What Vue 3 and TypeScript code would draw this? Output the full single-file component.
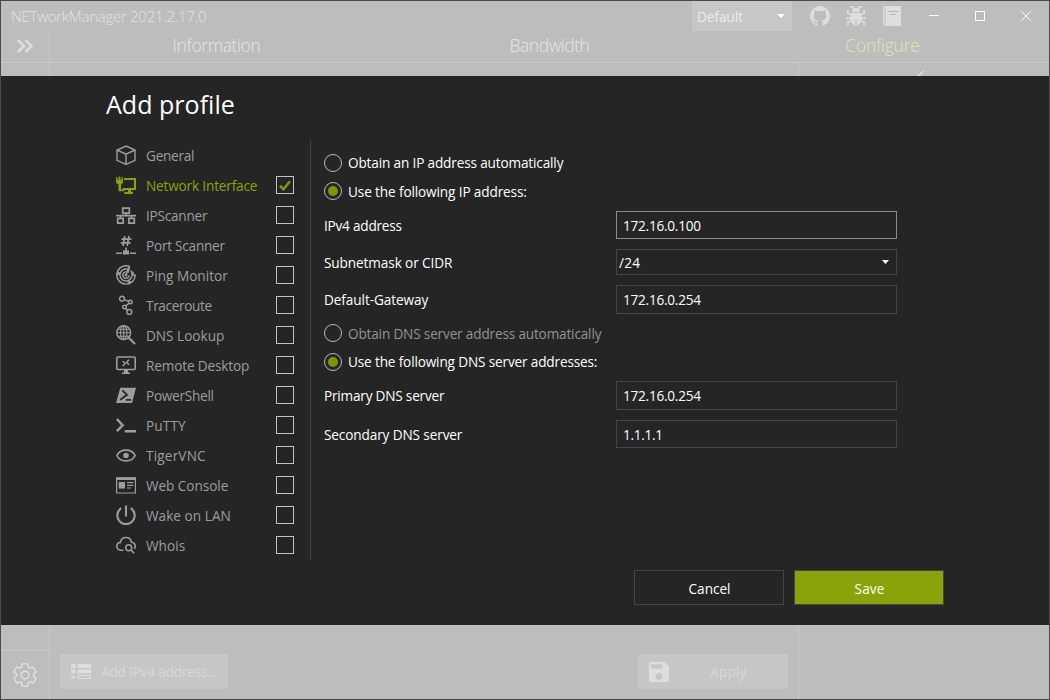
<script setup lang="ts">
import { ref } from 'vue'

interface ProfileView { name: string; width: number; icon: string; check: boolean }
interface FormRow {
  kind: 'radio' | 'text' | 'combo'
  label: string
  width: number
  cls: string
  value?: string
  valueWidth?: number
  on?: boolean
}

// Adjusts tracking so a label occupies the given number of pixels.
const vFit = {
  mounted(el: HTMLElement, binding: { value: number }) {
    const chars = (el.textContent ?? '').length
    if (!chars) return
    const natural = el.getBoundingClientRect().width
    el.style.letterSpacing = `${(binding.value + 0.8 - natural) / chars}px`
  },
}

const tabs = [
  { name: 'Information', width: 87, active: false },
  { name: 'Bandwidth', width: 79, active: false },
  { name: 'Configure', width: 73.5, active: true },
]

const selected = ref('Network Interface')

const views: ProfileView[] = [
  { name: 'General', width: 47.5, icon: 'cube', check: false },
  { name: 'Network Interface', width: 110.5, icon: 'nic', check: true },
  { name: 'IPScanner', width: 60.5, icon: 'lan', check: true },
  { name: 'Port Scanner', width: 78, icon: 'port', check: true },
  { name: 'Ping Monitor', width: 81, icon: 'radar', check: true },
  { name: 'Traceroute', width: 65, icon: 'route', check: true },
  { name: 'DNS Lookup', width: 77.5, icon: 'dns', check: true },
  { name: 'Remote Desktop', width: 102.5, icon: 'rdp', check: true },
  { name: 'PowerShell', width: 67, icon: 'ps', check: true },
  { name: 'PuTTY', width: 39, icon: 'putty', check: true },
  { name: 'TigerVNC', width: 59, icon: 'eye', check: true },
  { name: 'Web Console', width: 81.5, icon: 'web', check: true },
  { name: 'Wake on LAN', width: 84, icon: 'power', check: true },
  { name: 'Whois', width: 38.5, icon: 'whois', check: true },
]

const rows: FormRow[] = [
  { kind: 'radio', label: 'Obtain an IP address automatically', width: 214.5, cls: 'r-obtain-ip', on: false },
  { kind: 'radio', label: 'Use the following IP address:', width: 178, cls: 'r-use-ip low', on: true },
  { kind: 'text', label: 'IPv4 address', width: 77, cls: 'r-ipv4 hover', value: '172.16.0.100', valueWidth: 77 },
  { kind: 'combo', label: 'Subnetmask or CIDR', width: 127.5, cls: 'r-mask low', value: '/24', valueWidth: 20.5 },
  { kind: 'text', label: 'Default-Gateway', width: 103.5, cls: 'r-gateway low odd', value: '172.16.0.254', valueWidth: 77 },
  { kind: 'radio', label: 'Obtain DNS server address automatically', width: 252.5, cls: 'r-obtain-dns low disabled', on: false },
  { kind: 'radio', label: 'Use the following DNS server addresses:', width: 248.5, cls: 'r-use-dns', on: true },
  { kind: 'text', label: 'Primary DNS server', width: 119.5, cls: 'r-dns1 low odd', value: '172.16.0.254', valueWidth: 77 },
  { kind: 'text', label: 'Secondary DNS server', width: 137.5, cls: 'r-dns2 low', value: '1.1.1.1', valueWidth: 39 },
]

function gearPath(): string {
  const pts: string[] = []
  const at = (r: number, deg: number) => {
    const a = ((deg - 90) * Math.PI) / 180
    return `${(12 + r * Math.cos(a)).toFixed(2)} ${(12 + r * Math.sin(a)).toFixed(2)}`
  }
  for (let k = 0; k < 6; k++) {
    const c = k * 60
    pts.push(at(8.6, c - 22), at(11.5, c - 15), at(11.5, c + 15), at(8.6, c + 22))
  }
  return `M${pts.join('L')}Z`
}
const gear = gearPath()
</script>

<template>
  <div class="window">
    <header class="top">
      <div class="titlebar">
        <div class="app-title"><span v-fit="194.5">NETworkManager 2021.2.17.0</span></div>
        <div class="profile-combo">
          <span v-fit="45">Default</span>
          <svg width="8" height="4" viewBox="0 0 8 4"><path d="M0 0h8L4 4z" fill="#fff" /></svg>
        </div>
        <div class="links">
          <svg width="20" height="20" viewBox="2 2 20 20"><path fill="#dedede" d="M12 2A10 10 0 0 0 2 12c0 4.42 2.87 8.17 6.84 9.5.5.08.66-.23.66-.5v-1.69c-2.77.6-3.36-1.34-3.36-1.34-.46-1.16-1.11-1.47-1.11-1.47-.91-.62.07-.6.07-.6 1 .07 1.53 1.03 1.53 1.03.87 1.52 2.34 1.07 2.91.83.09-.65.35-1.09.63-1.34-2.22-.25-4.55-1.11-4.55-4.92 0-1.11.38-2 1.03-2.71-.1-.25-.45-1.29.1-2.64 0 0 .84-.27 2.75 1.02.79-.22 1.65-.33 2.5-.33.85 0 1.71.11 2.5.33 1.91-1.29 2.75-1.02 2.75-1.02.55 1.35.2 2.39.1 2.64.65.71 1.03 1.6 1.03 2.71 0 3.82-2.34 4.66-4.57 4.91.36.31.69.92.69 1.85V21c0 .27.16.59.67.5C19.14 20.16 22 16.42 22 12A10 10 0 0 0 12 2z" /></svg>
          <svg width="20" height="20" viewBox="0 0 20 20">
            <path fill="#dedede" d="M6 5.500C6 3.200 7.600 2 10 2s4 1.200 4 3.500l-1 .8H7zM4.800 7h10.400l.8 5c0 4-2.500 7-5.500 7.500V13h-1v6.500C6.500 19 4 16 4 12z" />
            <path fill="none" stroke="#dedede" stroke-width="1.700" d="M4.200.9h2.500L8 2.800M15.800.9h-2.500L12 2.800M5.500 8.800 1.900 7.500V4M14.500 8.800l3.600-1.300V4M5 12H0M15 12h5M5.500 15l-3.600 1v3.500M14.500 15l3.600 1v3.500" />
          </svg>
          <svg class="book" width="18" height="20" viewBox="0 0 18 20">
            <path fill="#dedede" d="M0 0h1.500v20H0zM2.500 0H18v20H2.500z" />
            <path fill="none" stroke="#b5b5b5" d="M5 5.500h10.500M7 8.500h6" />
          </svg>
        </div>
        <div class="captions">
          <svg width="10" height="10" viewBox="0 0 10 10"><path d="M0 4.500h10" stroke="#fff" /></svg>
          <svg width="10" height="10" viewBox="0 0 10 10"><path d="M.5.5h9v9h-9z" fill="none" stroke="#fff" /></svg>
          <svg width="10" height="10" viewBox="0 0 10 10"><path d="M0 0l10 10M10 0 0 10" stroke="#fff" stroke-width=".9" /></svg>
        </div>
      </div>
      <div class="tabbar">
        <div class="expander">
          <svg width="16" height="14" viewBox="0 0 16 14"><path d="M1 1l6 6-6 6M8.500 1l6 6-6 6" fill="none" stroke="#dedede" stroke-width="2.600" /></svg>
        </div>
        <div v-for="t in tabs" :key="t.name" class="tab" :class="{ active: t.active }">
          <span v-fit="t.width">{{ t.name }}</span>
        </div>
      </div>
      <div class="top-strip">
        <div class="rail"></div>
        <div class="center"></div>
        <div class="side">
          <svg width="7" height="5" viewBox="0 0 7 5"><path d="M6.500 0 1 5.500" stroke="#e6e6e6" stroke-width="1.300" /></svg>
        </div>
      </div>
    </header>

    <main class="dialog">
      <h1><span v-fit="128">Add profile</span></h1>
      <div class="body">
        <nav>
          <div v-for="v in views" :key="v.name" class="view" :class="{ selected: v.name === selected }">
            <svg class="icon" width="20" height="20" viewBox="0 0 20 20" fill="none" stroke="currentColor" stroke-width="1.400">
              <path v-if="v.icon === 'cube'" d="M10 1l9 4v10.300L10 19.400 1 15.300V5zM1 5l9 4.200L19 5M10 9.200v10.200" />
              <g v-else-if="v.icon === 'nic'">
                <path fill="currentColor" stroke="none" d="M0 2.200h1.500v2.500h1.200V1.500h1.700v3.200h1.200V2.200H7v5.500L5 9.500v5h3.500v1.700H2.500V9.500L0 7.700z" />
                <path stroke-width="2.100" d="M8 4h11v10H6.500" />
                <path fill="currentColor" stroke="none" d="M12 14h3v2.700h2V19H8v-1.500l4-.8z" />
              </g>
              <path v-else-if="v.icon === 'lan'" stroke-width="1.700" d="M6.700 3.200h6.600v5H6.700zM1.700 13.300h5.500v4.800H1.700zM12.800 13.300h5.500v4.800h-5.500zM0 10.700h20M10 8v2.700M4.500 10.700v2.500M15.500 10.700v2.500" />
              <g v-else-if="v.icon === 'port'">
                <path stroke-width="1.700" d="M8.800 1 7 11M13 1l-1.800 10M5.500 4.200h10M4.700 7.800h10" />
                <path stroke-width="1.600" d="M10 12.500V16M0 18.300h6M14 18.300h6" />
                <path fill="currentColor" stroke="none" d="M7 15.500h6v4H7z" />
              </g>
              <g v-else-if="v.icon === 'radar'">
                <path stroke-width="1.400" d="M13.700 1.500A9.200 9.200 0 1 0 19.200 10h-3.500M12 4.300a6 6 0 1 0 4 6M11.200 7.100a3.200 3.200 0 1 0 2 3.200M10 10l3-8.300M13.500 1.600l-1.300 6M14.700 5.500A6 6 0 0 1 16 10" />
                <circle cx="10" cy="10" r="1.500" fill="currentColor" stroke="none" />
                <circle cx="2.500" cy="8.500" r="1.700" fill="currentColor" stroke="none" />
                <circle cx="13.500" cy="17.500" r="1.700" fill="currentColor" stroke="none" />
                <circle cx="16.500" cy="8" r="1.400" fill="currentColor" stroke="none" />
              </g>
              <g v-else-if="v.icon === 'route'">
                <circle cx="6" cy="3.700" r="2.400" /><circle cx="14.300" cy="7" r="1.800" />
                <circle cx="8.500" cy="12" r="1.800" /><circle cx="13.300" cy="17" r="2.500" />
                <path d="M8.200 4.600 12.700 6.400M13 8.200 9.800 10.900M9.700 13.300l2 2" />
              </g>
              <g v-else-if="v.icon === 'dns'">
                <circle cx="7.700" cy="7.700" r="6.900" /><ellipse cx="7.700" cy="7.700" rx="3.200" ry="6.900" stroke-width="1.100" />
                <path stroke-width="1.100" d="M7.700.8v13.800M.8 7.700h13.800M2 4.200h11.400M2 11.200h11.400" />
                <path stroke-width="2.300" d="M12.700 12.700l6.300 6.300" />
              </g>
              <g v-else-if="v.icon === 'rdp'">
                <rect x=".8" y="2" width="18.400" height="12.500" rx="1" stroke-width="1.600" />
                <path stroke-width="1.500" d="M6.700 6.200l2.500 2.300-2.500 2.600M13 4.700l-2.500 2.500L13 9.800" />
                <path fill="currentColor" stroke="none" d="M8 15h4v2.500h2V19H6v-1.500h2z" />
              </g>
              <g v-else-if="v.icon === 'ps'">
                <path fill="currentColor" stroke="none" d="M4.300 2.700H20l-4 15.300H0z" />
                <path stroke="#252525" stroke-width="1.700" d="M6.300 5.300l4.700 4.500-6.700 5M10 14.800h5" />
              </g>
              <path v-else-if="v.icon === 'putty'" stroke-width="2.400" d="M.9 4.200l5.800 6L.9 16.200M8.700 16.200H20" />
              <g v-else-if="v.icon === 'eye'">
                <path stroke-width="1.700" d="M.9 10.500C4.200 3.300 15.800 3.300 19.100 10.500 15.800 17.700 4.200 17.700.9 10.500z" />
                <circle cx="10" cy="10.500" r="2.800" fill="currentColor" stroke="none" />
              </g>
              <g v-else-if="v.icon === 'web'">
                <path stroke-width="1.200" d="M.6 3h18.800v15H.6z" />
                <path fill="currentColor" stroke="none" d="M0 2.300h20V5H0zM2.700 7h6.300v6.500H2.700z" />
                <path stroke-width="1.200" d="M11 7.700h6.300M11 10.300h6.300M11 13h4" />
              </g>
              <path v-else-if="v.icon === 'power'" stroke-width="2.100" d="M5.200 3.200a8.700 8.700 0 1 0 9.600 0M10 .5v11" />
              <g v-else>
                <path stroke-width="1.600" d="M7.300 15.200H5C2.300 15.200.8 13.400.8 11.300S2.400 7.600 4.400 7.400C5 4.500 7.200 2.500 10 2.500c3 0 5 2 5.500 4.700 2.300.2 3.700 1.800 3.700 4 0 1-.3 1.800-.9 2.500" />
                <circle cx="12.700" cy="12.800" r="3" stroke-width="1.500" /><path stroke-width="1.600" d="M15 15l3.200 3.300" />
              </g>
            </svg>
            <div class="name"><span v-fit="v.width">{{ v.name }}</span></div>
            <div v-if="v.check" class="checkbox">
              <svg v-if="v.name === selected" width="12" height="11" viewBox="0 0 12 11"><path d="M.9 5.700 4.500 9.200 11 1.200" fill="none" stroke="#7c9508" stroke-width="2.600" /></svg>
            </div>
          </div>
        </nav>

        <form @submit.prevent>
          <div v-for="r in rows" :key="r.label" class="row" :class="r.cls">
            <div v-if="r.kind === 'radio'" class="radio"><i v-if="r.on"></i></div>
            <div class="label" :class="{ field: r.kind !== 'radio' }"><span v-fit="r.width">{{ r.label }}</span></div>
            <div v-if="r.kind !== 'radio'" class="input" :class="r.kind">
              <span v-fit="r.valueWidth">{{ r.value }}</span>
              <svg v-if="r.kind === 'combo'" width="7" height="4" viewBox="0 0 7 4"><path d="M0 0h7L3.500 4z" fill="#fff" /></svg>
            </div>
          </div>
        </form>
      </div>
      <div class="actions">
        <div class="btn"><span v-fit="41">Cancel</span></div>
        <div class="btn primary"><span v-fit="29">Save</span></div>
      </div>
    </main>

    <footer>
      <div class="rail">
        <div class="settings">
          <svg width="26" height="26" viewBox="-1 -1 26 26" fill="none" stroke="#e2e2e2" stroke-width="1.400" stroke-linejoin="round"><path :d="gear" /><circle cx="12" cy="12" r="3.800" /></svg>
        </div>
      </div>
      <div class="center">
        <div class="ghost add">
          <svg width="20" height="17" viewBox="0 0 20 17">
            <path fill="#dedede" d="M0 1h4.500v4H0zM6.500 1H20v4H6.500zM0 6.500h4.500v4H0zM6.500 6.500H20v4H6.500z" />
            <path fill="none" stroke="#dedede" d="M7 12.500h12.500v3H7zM.2 14h4.300M2.400 12v4.500" />
          </svg>
          <span v-fit="115.5">Add IPv4 address...</span>
        </div>
        <div class="ghost apply">
          <svg width="20" height="20" viewBox="3 3 18 18"><path fill="#dedede" d="M17 3H5a2 2 0 0 0-2 2v14a2 2 0 0 0 2 2h14c1.100 0 2-.9 2-2V7l-4-4zm-5 16a3 3 0 1 1 0-6 3 3 0 0 1 0 6zm3-10H5V5h10v4z" /></svg>
          <div class="apply-text"><span v-fit="36">Apply</span></div>
        </div>
      </div>
      <div class="side"></div>
    </footer>
  </div>
</template>

<style>
body { margin: 0; overflow: hidden; }
</style>

<style scoped>
.window {
  box-sizing: border-box;
  width: 1050px;
  height: 700px;
  border: 1px solid #4a4a4a;
  background: #bdbdbd;
  font-family: "Open Sans", "Noto Sans", sans-serif;
  font-size: 13.6px;
  line-height: 18px;
  color: #fff;
  display: flex;
  flex-direction: column;
  overflow: hidden;
}
.window * { box-sizing: border-box; }
svg { display: block; flex: none; }
span { white-space: nowrap; display: inline-block; }

.top { height: 75px; flex: none; }
.titlebar { display: flex; height: 30px; }
.app-title { width: 691px; padding: 6px 0 0 10px; font-size: 15px; font-weight: 300; color: #e4e4e4; }
.profile-combo {
  width: 100px;
  height: 30px;
  background: #c7c7c7;
  color: #ececec;
  display: flex;
  align-items: center;
  justify-content: space-between;
  padding: 2px 7px 0 5px;
}
.profile-combo svg { margin-top: -2px; }
.links { display: flex; gap: 16px; padding: 5px 0 0 18px; }
.book { margin-left: 1px; }
.captions { display: flex; gap: 36px; padding: 10px 0 0 28px; }
.captions svg { shape-rendering: crispEdges; }
.captions svg:last-child { shape-rendering: auto; }
.tabbar { display: flex; height: 32px; border-bottom: 1px solid #c9c9c9; }
.expander { width: 49px; border-right: 1px solid #c9c9c9; padding: 8px 0 0 16px; }
.tab { flex: 1; text-align: center; font-size: 17.5px; font-weight: 300; color: #e6e6e6; padding-top: 5px; }
.tab.active { color: #dce7b8; }
.top-strip { display: flex; height: 13px; }
.rail { width: 49px; border-right: 1px solid #c9c9c9; }
.center { width: 749px; border-right: 1px solid #c9c9c9; }
.side { flex: 1; }
.top-strip .side { padding: 8px 0 0 118px; }

.dialog { height: 549px; flex: none; background: #252525; padding-left: 105px; }
h1 { margin: 0; height: 64px; padding-top: 12px; font-size: 25px; line-height: 32px; font-weight: 400; }
.body { display: flex; height: 420px; }
nav { width: 205px; border-right: 1px solid #454545; }
.view { display: flex; align-items: center; height: 30px; padding-left: 10px; color: #9d9d9d; }
.name { width: 139px; padding: 2px 0 0 10px; }
.view.selected { color: #8aa30a; }
.checkbox {
  width: 18px;
  height: 18px;
  border: 1px solid #c2c2c2;
  margin-left: 1px;
  display: flex;
  align-items: center;
  justify-content: center;
}
form { padding: 14px 0 0 13px; }
.row { display: flex; align-items: center; }
.row .label { margin-left: 6px; }
.row.low .label { padding-top: 2px; }
.row .label.field { width: 292px; margin-left: 0; }
.row.hover .label { padding-top: 2px; }
.r-obtain-ip { height: 18px; margin-bottom: 10px; }
.r-use-ip { height: 18px; margin-bottom: 11px; }
.r-ipv4 { height: 28px; margin-bottom: 10px; }
.r-mask { height: 26px; margin-bottom: 10px; }
.r-gateway { height: 29px; margin-bottom: 10px; }
.r-obtain-dns { height: 18px; margin-bottom: 11px; }
.r-use-dns { height: 18px; margin-bottom: 10px; }
.r-dns1 { height: 29px; margin-bottom: 10px; }
.r-dns2 { height: 28px; }
.row.odd .label { padding-top: 1px; }
.disabled .label { color: #939393; }
.radio {
  width: 18px;
  height: 18px;
  border: 1px solid #b8b8b8;
  border-radius: 50%;
  display: flex;
  align-items: center;
  justify-content: center;
}
.radio i { width: 10px; height: 10px; border-radius: 50%; background: #7c9600; }
.input {
  width: 281px;
  height: 100%;
  border: 1px solid #454545;
  display: flex;
  align-items: center;
  justify-content: space-between;
  padding: 2px 7px 0 6px;
}
.odd .input { padding-top: 1px; }
.hover .input { border-color: #8a8a8a; }
.input.combo { padding-left: 2px; }
.input.combo svg { margin-top: -2px; }
.actions { display: flex; gap: 10px; padding: 10px 0 0 528px; }
.btn {
  width: 150px;
  height: 35px;
  border: 1px solid #454545;
  display: flex;
  align-items: center;
  justify-content: center;
  padding: 2px 0 0 1px;
}
.btn.primary { background: #8aa309; }

footer { flex: 1; display: flex; }
footer .rail { padding-top: 25px; }
.settings { height: 49px; border-top: 1px solid #c9c9c9; padding: 11px 0 0 11px; }
footer .center { display: flex; justify-content: space-between; padding: 29px 10px 0 10px; }
.ghost { height: 35px; background: #c6c6c6; color: #d8d8d8; display: flex; align-items: center; padding-left: 11px; }
.add { width: 168px; }
.add span { margin: 1px 0 0 10px; }
.apply { width: 150px; }
.apply-text { flex: 1; text-align: center; padding-top: 1px; }
</style>
